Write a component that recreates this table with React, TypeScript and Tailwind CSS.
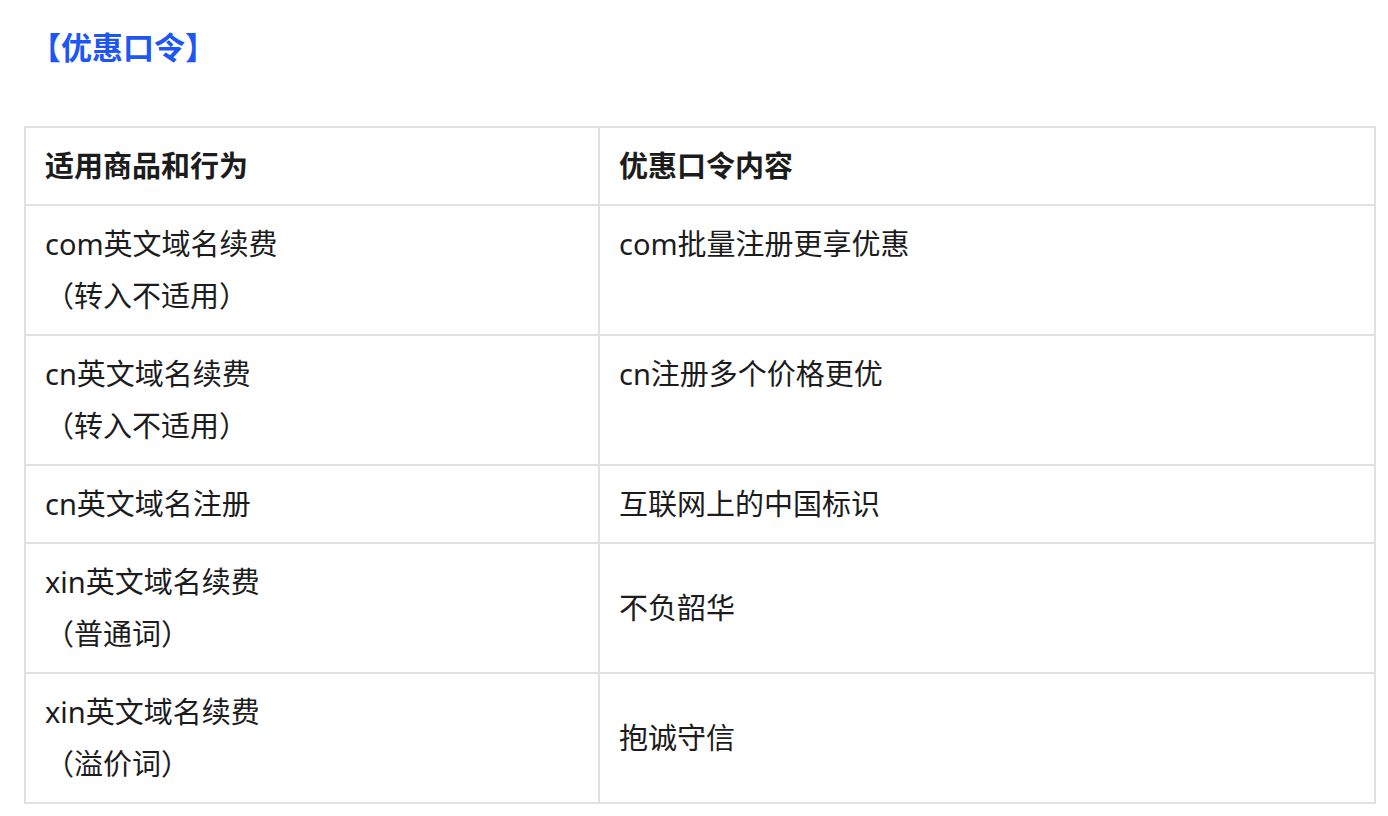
/* Promo code table: a blue heading and a two-column bordered table. */

const ROWS: { product: string[]; code: string; align: "top" | "middle" }[] = [
  { product: ["com英文域名续费", "（转入不适用）"], code: "com批量注册更享优惠", align: "top" },
  { product: ["cn英文域名续费", "（转入不适用）"], code: "cn注册多个价格更优", align: "top" },
  { product: ["cn英文域名注册"], code: "互联网上的中国标识", align: "top" },
  { product: ["xin英文域名续费", "（普通词）"], code: "不负韶华", align: "middle" },
  { product: ["xin英文域名续费", "（溢价词）"], code: "抱诚守信", align: "middle" },
]

const cell = "border-2 border-[#e1e1e1] px-[19px] py-[12px] text-left"

export default function App() {
  return (
    <div
      className="min-h-screen bg-white px-6 pt-[19px] text-[29px] leading-[52px] text-[#1c1c1c]"
      style={{ fontFamily: '"Noto Sans", "Noto Sans CJK SC", sans-serif' }}
    >
      <h2 className="ml-[6px] text-[31px] font-bold leading-[56px] text-[#1d56f2]">【优惠口令】</h2>

      <table className="mt-[51px] w-[1352px] table-fixed border-collapse">
        <thead>
          <tr>
            <th className={`${cell} w-[574px] font-bold`}>适用商品和行为</th>
            <th className={`${cell} font-bold`}>优惠口令内容</th>
          </tr>
        </thead>
        <tbody>
          {ROWS.map((row, i) => (
            <tr key={i}>
              <td className={`${cell} align-top`}>
                {row.product.map((line) => (
                  <div key={line}>{line}</div>
                ))}
              </td>
              <td className={`${cell} ${row.align === "top" ? "align-top" : "align-middle"}`}>{row.code}</td>
            </tr>
          ))}
        </tbody>
      </table>
    </div>
  )
}
